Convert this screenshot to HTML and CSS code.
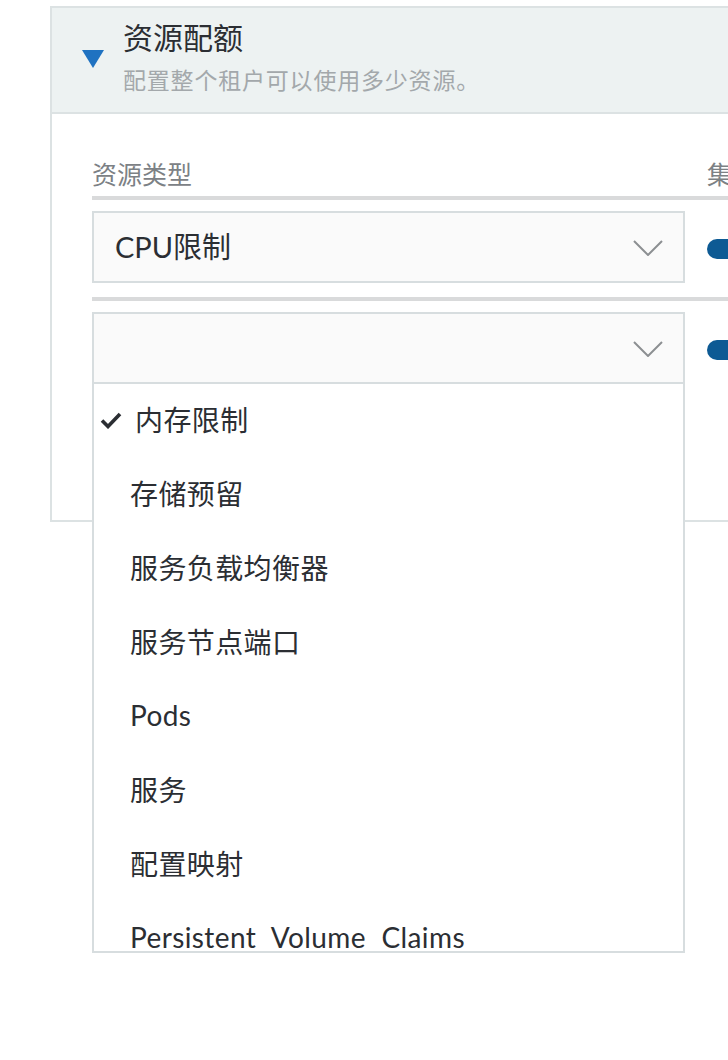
FILE: index.html
```html
<!DOCTYPE html>
<html lang="zh-CN">
<head>
<meta charset="utf-8">
<title>资源配额</title>
<link rel="stylesheet" href="styles.css">
</head>
<body>
<section class="card">
  <header class="card-head">
    <span class="caret"></span>
    <div class="head-text">
      <h2 class="title">资源配额</h2>
      <p class="subtitle">配置整个租户可以使用多少资源。</p>
    </div>
  </header>
  <div class="card-body">
    <div class="cols labels">
      <div class="col-type">资源类型</div>
      <div class="col-limit">集群</div>
    </div>
    <div class="cols row">
      <div class="col-type">
        <div class="select">
          <span class="select-value">CPU限制</span>
          <svg class="chev" width="30" height="16" viewBox="0 0 30 16"><path d="M1 1 L15 15 L29 1" fill="none" stroke="#8c8f92" stroke-width="2"/></svg>
        </div>
      </div>
      <div class="col-limit"><span class="toggle"></span></div>
    </div>
    <div class="cols row">
      <div class="col-type">
        <div class="select-wrap">
          <div class="select">
            <span class="select-value"></span>
            <svg class="chev" width="30" height="16" viewBox="0 0 30 16"><path d="M1 1 L15 15 L29 1" fill="none" stroke="#8c8f92" stroke-width="2"/></svg>
          </div>
          <ul class="menu">
            <li class="item checked"><svg class="check" width="22" height="18" viewBox="0 0 22 18"><path d="M2 9.5 L8 15.5 L20 3" fill="none" stroke="#2b2e33" stroke-width="3.6"/></svg><span>内存限制</span></li>
            <li class="item">存储预留</li>
            <li class="item">服务负载均衡器</li>
            <li class="item">服务节点端口</li>
            <li class="item">Pods</li>
            <li class="item">服务</li>
            <li class="item">配置映射</li>
            <li class="item">Persistent Volume Claims</li>
          </ul>
        </div>
      </div>
      <div class="col-limit"><span class="toggle"></span></div>
    </div>
  </div>
</section>
</body>
</html>
```

FILE: styles.css
```css
* { box-sizing: border-box; }
html, body { margin: 0; padding: 0; }
body {
  width: 728px;
  height: 1060px;
  overflow: hidden;
  background: #ffffff;
  font-family: Lato, "Noto Sans CJK SC", sans-serif;
  color: #2b2e33;
}
.card {
  margin: 6px 0 0 50px;
  width: 760px;
  border: 2px solid #dce2e3;
  border-right: none;
}
.card-head {
  display: flex;
  align-items: flex-start;
  gap: 19px;
  height: 106px;
  padding: 11px 0 0 30px;
  background: #edf2f2;
  border-bottom: 2px solid #dce2e3;
}
.caret {
  width: 0;
  height: 0;
  border-left: 11px solid transparent;
  border-right: 11px solid transparent;
  border-top: 18px solid #1f72c1;
  margin-top: 31px;
}
.title {
  margin: 0;
  font-size: 30px;
  font-weight: 400;
  line-height: 36px;
  color: #2b2e33;
}
.subtitle {
  margin: 11px 0 0;
  font-size: 23px;
  line-height: 28px;
  color: #a3a8ab;
  letter-spacing: 0.8px;
}
.card-body {
  height: 406px;
  padding: 45px 0 0 40px;
}
.cols {
  display: flex;
  gap: 22px;
}
.col-type { width: 593px; flex: none; }
.col-limit { flex: 1; }
.labels {
  font-size: 25px;
  line-height: 30px;
  color: #7c8185;
  border-bottom: 4px solid #d9dadb;
  padding-bottom: 7px;
  margin-right: -40px;
}
.row {
  align-items: center;
  margin-top: 11px;
}
.row + .row {
  border-top: 4px solid #d9dadb;
  padding-top: 11px;
  margin-top: 14px;
}
.select {
  display: flex;
  align-items: center;
  justify-content: space-between;
  height: 72px;
  padding: 0 20px 4px 21px;
  background: #fafafa;
  border: 2px solid #d7dddf;
  font-size: 29px;
  color: #2b2e33;
}
.chev { margin-top: 5px; }
.toggle {
  display: block;
  width: 60px;
  height: 20px;
  margin-top: 4px;
  border-radius: 10px 0 0 10px;
  background: #0d5a94;
}
.select-wrap { position: relative; }
.menu {
  position: absolute;
  left: 0;
  top: 72px;
  z-index: 5;
  width: 593px;
  height: 569px;
  margin: 0;
  padding: 0;
  list-style: none;
  overflow: hidden;
  background: #ffffff;
  border: 2px solid #d7dddf;
  border-top: none;
}
.item {
  display: flex;
  align-items: center;
  height: 74px;
  padding: 0 0 5px 36px;
  font-size: 28px;
  color: #2b2e33;
  letter-spacing: 0.4px;
  word-spacing: 8px;
  white-space: nowrap;
}
.item.checked {
  padding-left: 6px;
  gap: 13px;
}
.check { flex: none; margin-top: 3px; }
```
